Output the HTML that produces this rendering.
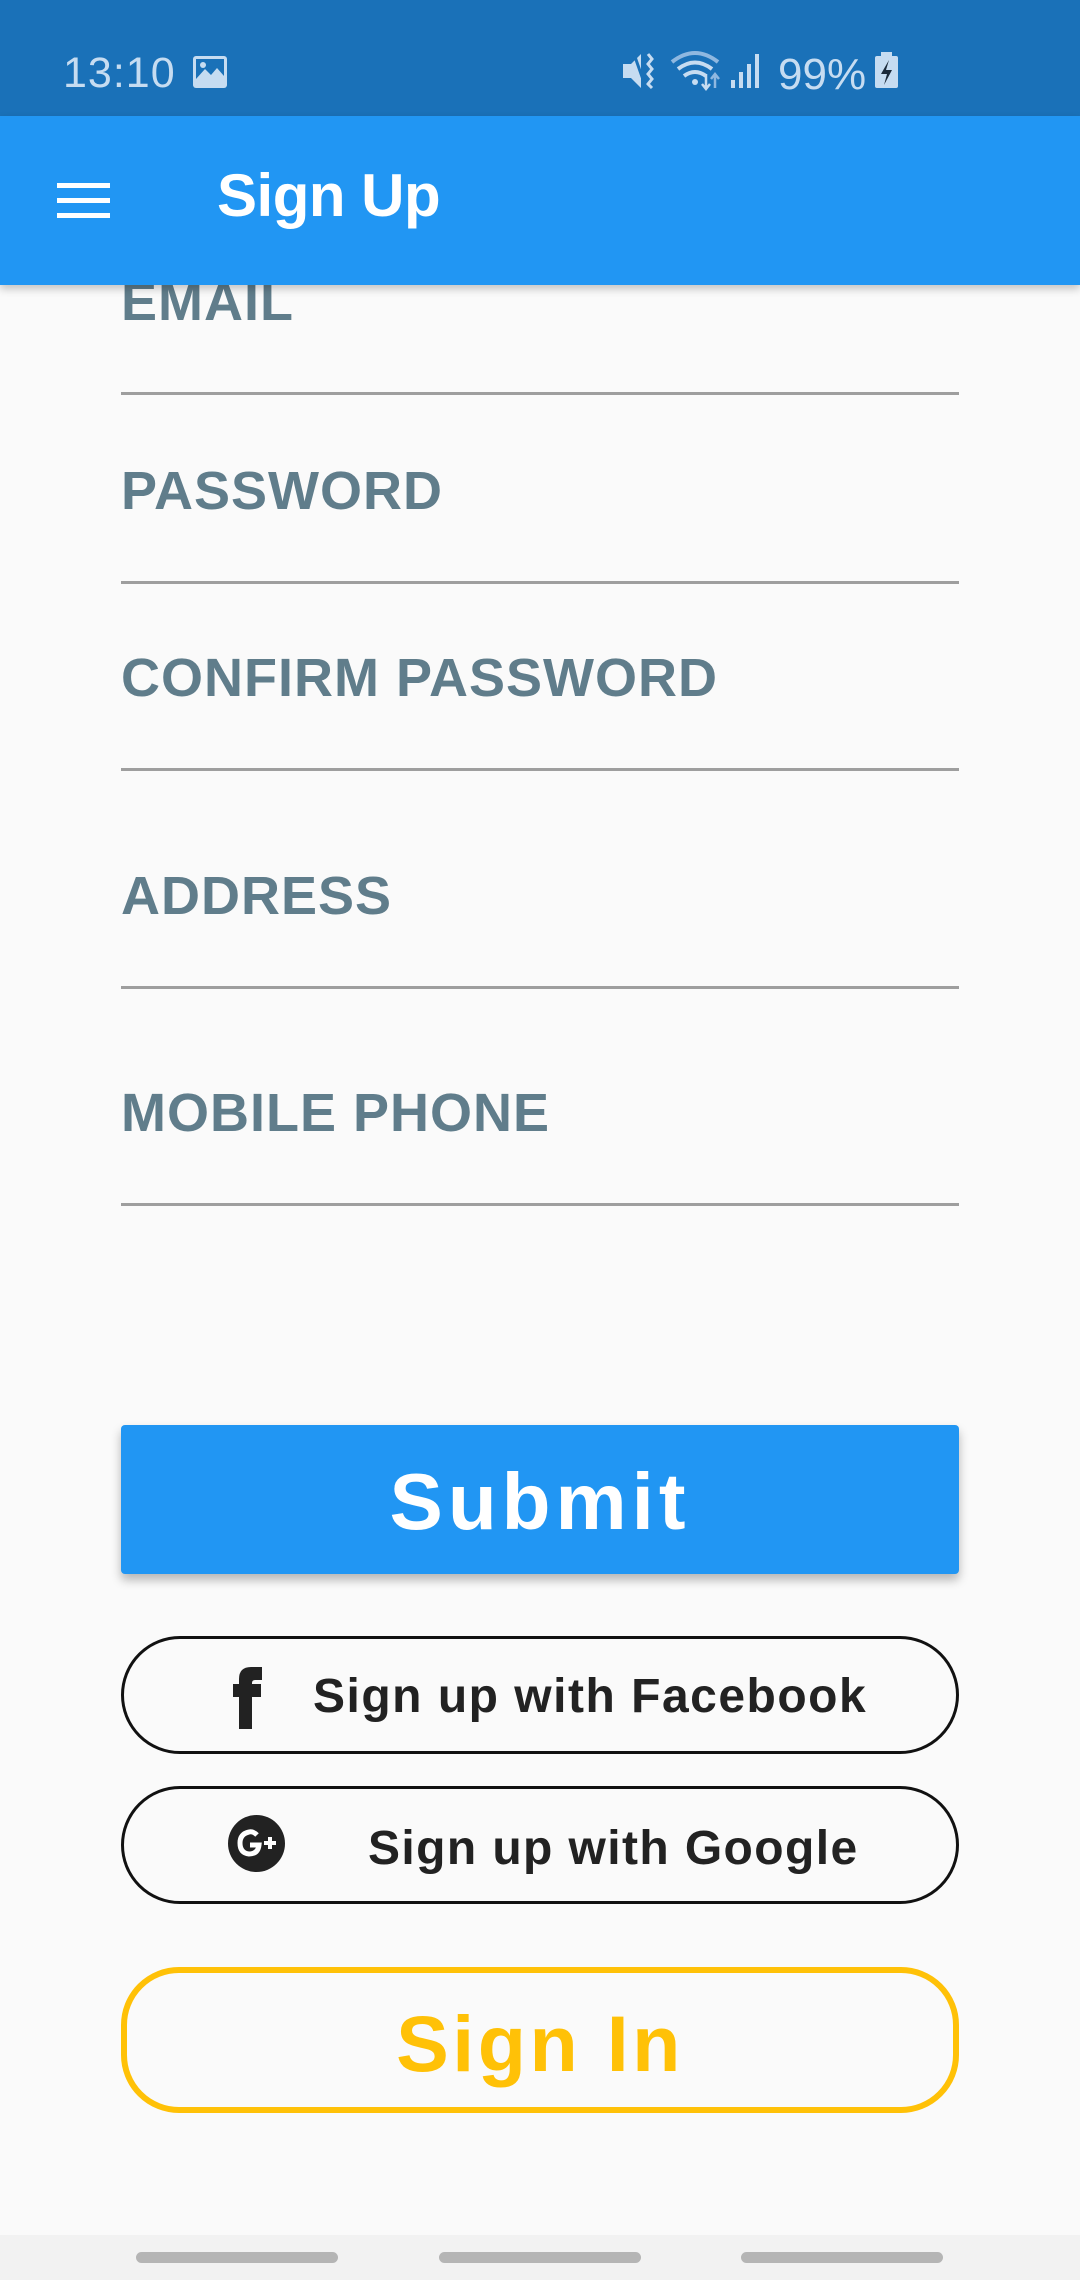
<!DOCTYPE html>
<html><head><meta charset="utf-8"><style>
*{margin:0;padding:0;box-sizing:border-box}
body{width:1080px;height:2280px;background:#fafafa;position:relative;overflow:hidden;font-family:"Liberation Sans",sans-serif}
.a{position:absolute;line-height:1;white-space:nowrap}
.lab{left:121px;font-size:54px;font-weight:bold;color:#607d8b;letter-spacing:1px}
.ln{position:absolute;left:121px;width:838px;height:3px;background:#9e9e9e}
.btn{position:absolute;left:121px;width:838px;border:3px solid #111;border-radius:60px}
.top{z-index:5}
</style></head><body>
<div class="a lab" style="top:275px">EMAIL</div>
<div class="ln" style="top:392px"></div>
<div class="a lab" style="top:464px">PASSWORD</div>
<div class="ln" style="top:581px"></div>
<div class="a lab" style="top:651px">CONFIRM PASSWORD</div>
<div class="ln" style="top:768px"></div>
<div class="a lab" style="top:869px">ADDRESS</div>
<div class="ln" style="top:986px"></div>
<div class="a lab" style="top:1086px">MOBILE PHONE</div>
<div class="ln" style="top:1203px"></div>

<div class="top" style="position:absolute;left:0;top:0;width:1080px;height:116px;background:#1a71b8"></div>
<div class="a top" style="left:63px;top:52px;font-size:43px;color:#c6dcf1;letter-spacing:1px">13:10</div>
<svg class="top" style="position:absolute;left:193px;top:56px" width="34" height="32" viewBox="0 0 34 32"><rect x="0" y="0" width="34" height="32" rx="3" fill="#c6dcf1"/><rect x="3" y="3" width="28" height="20" fill="#1a71b8"/><path d="M3 23 L12 13 L18 19 L24 12 L31 20 L31 29 L3 29Z" fill="#c6dcf1"/><circle cx="10" cy="9" r="3" fill="#c6dcf1"/></svg>
<svg class="top" style="position:absolute;left:620px;top:50px" width="290" height="42" viewBox="0 0 290 42">
<path d="M3 14 L11 14 L21 4 L21 38 L11 28 L3 28Z" fill="#c6dcf1"/><path d="M28 4 L32 9 L28 14 L32 19 L28 24 L32 29 L28 34 L32 38" stroke="#c6dcf1" stroke-width="3" fill="none"/><path d="M14 4 L26 38" stroke="#1a71b8" stroke-width="3"/>
<path d="M52 12 Q75 -6 98 12" stroke="#8fb8e0" stroke-width="4" fill="none"/><path d="M58 19 Q75 6 92 19" stroke="#c6dcf1" stroke-width="4" fill="none"/><path d="M64 26 Q75 18 86 26" stroke="#c6dcf1" stroke-width="4" fill="none"/><circle cx="75" cy="32" r="3" fill="#c6dcf1"/>
<path d="M86 24 V38 M82 34 L86 39 L90 34" stroke="#c6dcf1" stroke-width="2.5" fill="none"/><path d="M95 38 V25 M91 29 L95 24 L99 29" stroke="#8fb8e0" stroke-width="2.5" fill="none"/>
<rect x="111" y="30" width="4" height="8" fill="#c6dcf1"/><rect x="119" y="22" width="4" height="16" fill="#c6dcf1"/><rect x="127" y="14" width="4" height="24" fill="#c6dcf1"/><rect x="135" y="4" width="4" height="34" fill="#c6dcf1"/>
<rect x="255" y="6" width="23" height="32" rx="2" fill="#c6dcf1"/><rect x="261" y="2" width="11" height="5" fill="#c6dcf1"/><path d="M269 10 L261 24 L267 24 L264 35 L272 20 L266 20Z" fill="#1b2a3a"/>
</svg>
<div class="a top" style="left:778px;top:53px;font-size:44px;color:#c6dcf1">99%</div>
<div class="top" style="position:absolute;left:0;top:116px;width:1080px;height:169px;background:#2196f3;box-shadow:0 4px 8px rgba(0,0,0,0.22)"></div>
<div class="top" style="position:absolute;left:57px;top:183px;width:53px;height:5px;background:#fff"></div>
<div class="top" style="position:absolute;left:57px;top:198px;width:53px;height:5px;background:#fff"></div>
<div class="top" style="position:absolute;left:57px;top:213px;width:53px;height:5px;background:#fff"></div>
<div class="a top" style="left:217px;top:166px;font-size:60px;color:#fff;font-weight:bold;letter-spacing:-0.5px">Sign Up</div>

<div style="position:absolute;left:121px;top:1425px;width:838px;height:149px;background:#2196f3;border-radius:4px;box-shadow:0 6px 10px rgba(0,0,0,0.28)"></div>
<div class="a" style="left:121px;width:838px;text-align:center;top:1462px;font-size:80px;font-weight:bold;color:#fff;letter-spacing:5px">Submit</div>

<div class="btn" style="top:1636px;height:118px"></div>
<svg style="position:absolute;left:233px;top:1667px" width="30" height="62" viewBox="0 0 30 62"><path d="M6 62 V30 H0 V17 H6 V12 Q6 0 18 0 H29 V13 H22 Q19 13 19 16 V17 H28 V30 H19 V62Z" fill="#222"/></svg>
<div class="a" style="left:313px;top:1673px;font-size:48px;font-weight:bold;color:#222;letter-spacing:1.5px">Sign up with Facebook</div>

<div class="btn" style="top:1786px;height:118px"></div>
<svg style="position:absolute;left:228px;top:1815px" width="57" height="57" viewBox="0 0 57 57"><circle cx="28.5" cy="28.5" r="28.5" fill="#222"/><path d="M29 20 Q25 16 21 17 Q12 19 12 28 Q12 38 21 39 Q30 39 31 30 H22" stroke="#fff" stroke-width="5" fill="none"/><path d="M42 22 V34 M36 28 H48" stroke="#fff" stroke-width="4"/></svg>
<div class="a" style="left:368px;top:1825px;font-size:48px;font-weight:bold;color:#222;letter-spacing:1.4px">Sign up with Google</div>

<div style="position:absolute;left:121px;top:1967px;width:838px;height:146px;border:6px solid #ffc107;border-radius:58px"></div>
<div class="a" style="left:121px;width:838px;text-align:center;top:2004px;font-size:79px;font-weight:bold;color:#ffc107;letter-spacing:3.5px">Sign In</div>

<div style="position:absolute;left:0;top:2235px;width:1080px;height:45px;background:#f2f2f2"></div>
<div style="position:absolute;left:136px;top:2252px;width:202px;height:11px;border-radius:6px;background:#b5b5b5"></div>
<div style="position:absolute;left:439px;top:2252px;width:202px;height:11px;border-radius:6px;background:#b5b5b5"></div>
<div style="position:absolute;left:741px;top:2252px;width:202px;height:11px;border-radius:6px;background:#b5b5b5"></div>
</body></html>
